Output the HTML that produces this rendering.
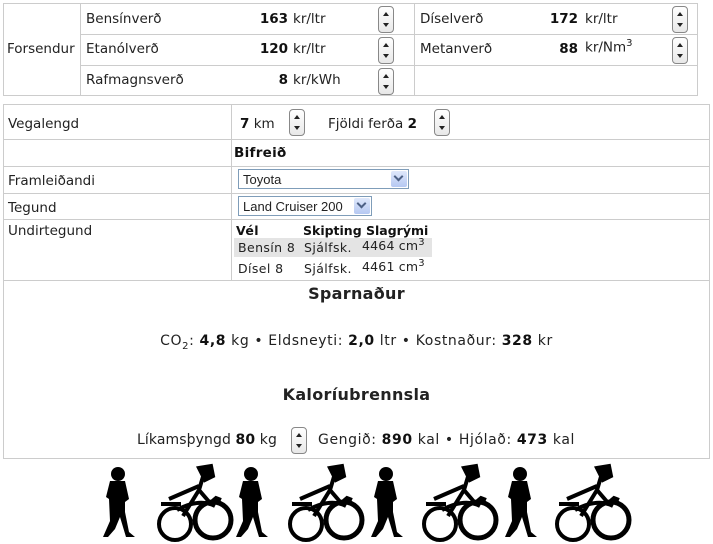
<!DOCTYPE html>
<html><head><meta charset="utf-8"><style>
body{margin:0;width:713px;height:544px;background:#fff;font-family:"DejaVu Sans",Verdana,sans-serif;font-size:13.5px;color:#222;position:relative;overflow:hidden}
.a{position:absolute;white-space:nowrap}
.l{position:absolute;background:#ccc}
b{color:#111}
.sp{position:absolute;width:14px;height:25px;border:1px solid #888;border-radius:4px;background:linear-gradient(#fff,#e8e8e8)}
.sp:before{content:"";position:absolute;left:4px;top:5px;border:3px solid transparent;border-bottom:4px solid #222;border-top:0}
.sp:after{content:"";position:absolute;left:4px;bottom:5px;border:3px solid transparent;border-top:4px solid #222;border-bottom:0}
.sel{position:absolute;border:1px solid #7f9db9;background:#fff;font-family:"Liberation Sans",Arial,sans-serif;font-size:13px;height:20px;line-height:20px;padding-left:4px;box-sizing:border-box}
.dd{position:absolute;right:1px;top:1px;width:16px;height:16px;background:linear-gradient(#dfe8fb,#b5c8f2);border-radius:2px}
.dd:after{content:"";position:absolute;left:4px;width:5px;height:5px;border-right:2px solid #4d6185;border-bottom:2px solid #4d6185;transform:rotate(45deg);top:2px}
sup{font-size:10px}
sub{font-size:10px}
.s{font-size:12.5px;letter-spacing:.4px}
.c{letter-spacing:.6px;font-size:14px}
h{font-weight:bold;font-size:16px;letter-spacing:.3px}
</style></head><body>
<div class="l" style="left:3px;top:3px;width:695px;height:1px"></div>
<div class="l" style="left:3px;top:95px;width:695px;height:1px"></div>
<div class="l" style="left:3px;top:3px;width:1px;height:93px"></div>
<div class="l" style="left:697px;top:3px;width:1px;height:93px"></div>
<div class="l" style="left:80px;top:3px;width:1px;height:93px"></div>
<div class="l" style="left:414px;top:3px;width:1px;height:93px"></div>
<div class="l" style="left:80px;top:34px;width:617px;height:1px"></div>
<div class="l" style="left:80px;top:65px;width:617px;height:1px"></div>
<div class="a" style="left:7px;top:41px">Forsendur</div>
<div class="a" style="left:86px;top:11px">Bensínverð</div>
<div class="a" style="left:86px;top:41px">Etanólverð</div>
<div class="a" style="left:86px;top:72px">Rafmagnsverð</div>
<div class="a" style="left:238px;top:11px;width:50px;text-align:right"><b>163</b></div>
<div class="a" style="left:238px;top:41px;width:50px;text-align:right"><b>120</b></div>
<div class="a" style="left:238px;top:72px;width:50px;text-align:right"><b>8</b></div>
<div class="a" style="left:293px;top:11px">kr/ltr</div>
<div class="a" style="left:293px;top:41px">kr/ltr</div>
<div class="a" style="left:293px;top:72px">kr/kWh</div>
<div class="sp" style="left:378px;top:6px"></div>
<div class="sp" style="left:378px;top:37px"></div>
<div class="sp" style="left:378px;top:68px"></div>
<div class="a" style="left:420px;top:11px">Díselverð</div>
<div class="a" style="left:420px;top:41px">Metanverð</div>
<div class="a" style="left:528px;top:11px;width:50px;text-align:right"><b>172</b></div>
<div class="a" style="left:528px;top:41px;width:50px;text-align:right"><b>88</b></div>
<div class="a" style="left:585px;top:11px">kr/ltr</div>
<div class="a" style="left:585px;top:38px">kr/Nm<sup>3</sup></div>
<div class="sp" style="left:672px;top:6px"></div>
<div class="sp" style="left:672px;top:37px"></div>
<div class="l" style="left:3px;top:104px;width:707px;height:1px"></div>
<div class="l" style="left:3px;top:458px;width:707px;height:1px"></div>
<div class="l" style="left:3px;top:104px;width:1px;height:355px"></div>
<div class="l" style="left:709px;top:104px;width:1px;height:355px"></div>
<div class="l" style="left:231px;top:104px;width:1px;height:176px"></div>
<div class="l" style="left:3px;top:139px;width:707px;height:1px"></div>
<div class="l" style="left:3px;top:166px;width:707px;height:1px"></div>
<div class="l" style="left:3px;top:193px;width:707px;height:1px"></div>
<div class="l" style="left:3px;top:219px;width:707px;height:1px"></div>
<div class="l" style="left:3px;top:280px;width:707px;height:1px"></div>
<div class="a" style="left:8px;top:116px">Vegalengd</div>
<div class="a" style="left:240px;top:116px"><b>7</b> km</div>
<div class="sp" style="left:289px;top:109px"></div>
<div class="a" style="left:328px;top:116px">Fjöldi ferða <b>2</b></div>
<div class="sp" style="left:434px;top:109px"></div>
<div class="a" style="left:234px;top:145px;letter-spacing:.3px"><b>Bifreið</b></div>
<div class="a" style="left:8px;top:173px">Framleiðandi</div>
<div class="sel" style="left:238px;top:169px;width:171px">Toyota<span class="dd"></span></div>
<div class="a" style="left:8px;top:200px">Tegund</div>
<div class="sel" style="left:238px;top:196px;width:134px">Land Cruiser 200<span class="dd"></span></div>
<div class="a" style="left:8px;top:223px">Undirtegund</div>
<div class="a s" style="left:236px;top:223px"><b>Vél</b></div>
<div class="a s" style="left:303px;top:223px;letter-spacing:0"><b>Skipting Slagrými</b></div>
<div style="position:absolute;left:234px;top:238px;width:198px;height:19px;background:#e4e4e4"></div>
<div class="a s" style="left:238px;top:240px">Bensín 8</div>
<div class="a s" style="left:304px;top:240px">Sjálfsk.</div>
<div class="a s" style="left:362px;top:237px;letter-spacing:.2px">4464 cm<sup>3</sup></div>
<div class="a s" style="left:238px;top:261px">Dísel 8</div>
<div class="a s" style="left:304px;top:261px">Sjálfsk.</div>
<div class="a s" style="left:362px;top:258px;letter-spacing:.2px">4461 cm<sup>3</sup></div>
<div class="a" style="left:0;width:713px;top:284px;text-align:center"><h>Sparnaður</h></div>
<div class="a c" style="left:0;width:713px;top:333px;text-align:center">CO<sub>2</sub>: <b>4,8</b> kg • Eldsneyti: <b>2,0</b> ltr • Kostnaður: <b>328</b> kr</div>
<div class="a" style="left:0;width:713px;top:385px;text-align:center"><h>Kaloríubrennsla</h></div>
<div class="a c" style="left:137px;top:432px;letter-spacing:.1px">Líkamsþyngd <b>80</b> kg</div>
<div class="sp" style="left:291px;top:427px"></div>
<div class="a c" style="left:318px;top:432px">Gengið: <b>890</b> kal • Hjólað: <b>473</b> kal</div>
<svg width="713" height="84" style="position:absolute;left:0;top:460px" viewBox="0 0 713 84">
<defs>
<g id="w" fill="#000"><circle cx="14" cy="12" r="7"/><path d="M6 19 h15 l4 18 l-4 3 l0 10 l4 20 l6 5 h-9 l-6 -20 l-5 12 l-7 8 h-5 l7 -16 l-1 -22 l-3 -2 z"/></g>
<g id="bk" fill="none" stroke="#000" stroke-width="4"><circle cx="20" cy="60" r="16"/><circle cx="58" cy="56" r="18" stroke-width="5"/><path d="M6 40 h20 M14 35 l30 -13 M50 6 l-6 20 l12 14 M44 26 l-16 26 M22 46 q22 -12 38 -4 M54 40 l7 -6 l5 2"/><path d="M44 4 l12 -2 l2 10 l-8 4 z" fill="#000"/></g>
</defs>
<use href="#w" x="104" y="2"/><use href="#bk" x="155" y="4"/>
<use href="#w" x="237" y="2"/><use href="#bk" x="286" y="4"/>
<use href="#w" x="372" y="2"/><use href="#bk" x="420" y="4"/>
<use href="#w" x="506" y="2"/><use href="#bk" x="553" y="4"/>
</svg>
</body></html>
